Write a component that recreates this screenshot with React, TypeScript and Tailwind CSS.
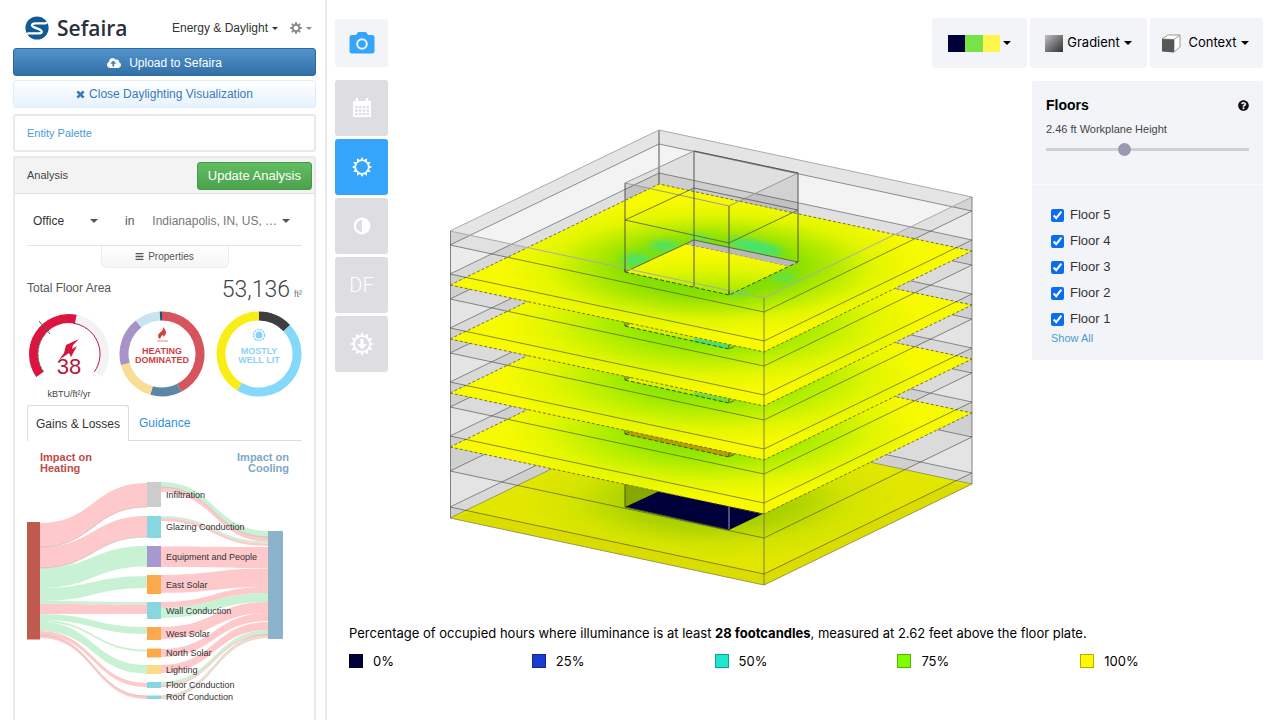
import type { ReactNode } from "react";
import { FaBars, FaCloudUploadAlt, FaQuestionCircle } from "react-icons/fa";

type Point = [number, number];

const BLUE = "#35a4fb";

function Caret() {
  return (
    <svg viewBox="0 0 8 4" className="w-2 h-1 shrink-0" aria-hidden="true">
      <path d="M0 0h8L4 4z" fill="currentColor" />
    </svg>
  );
}

function SmallCaret() {
  return (
    <svg viewBox="0 0 8 4" className="w-[6px] h-[3px] shrink-0" aria-hidden="true">
      <path d="M0 0h8L4 4z" fill="currentColor" />
    </svg>
  );
}

function SpikyRing({ size, children }: { size: number; children?: ReactNode }) {
  return (
    <svg viewBox="-12 -12 24 24" width={size} height={size} aria-hidden="true">
      <circle r="8" fill="none" stroke="currentColor" strokeWidth="1.800" />
      {Array.from({ length: 12 }, (_, i) => (
        <path key={i} d="M-2 -8.500L0 -12L2 -8.500z" fill="currentColor" transform={`rotate(${i * 30})`} />
      ))}
      {children}
    </svg>
  );
}

function Logo() {
  return (
    <div className="flex items-center gap-2">
      <svg viewBox="0 0 24 24" className="w-6 h-6" aria-hidden="true">
        <clipPath id="logo">
          <circle cx="12" cy="12" r="11.600" />
        </clipPath>
        <g clipPath="url(#logo)">
          <rect width="24" height="24" fill="#125a94" />
          <path
            d="M24 5.500L20.500 7.400H10.500C6.600 7.400 6 9.800 8.800 11.200L15 13.700C17.800 15.200 17.200 17.400 13.600 17.400H3.600L0 18.500"
            fill="none"
            stroke="#fff"
            strokeWidth="2.400"
          />
        </g>
      </svg>
      <span className="font-['Open_Sans',sans-serif] font-semibold text-[21px] leading-6 text-[#2b2f3c]">
        Sefaira
      </span>
    </div>
  );
}

function polar(r: number, deg: number): Point {
  const a = ((deg - 90) * Math.PI) / 180;
  return [r * Math.cos(a), r * Math.sin(a)];
}

function arc(r: number, from: number, to: number) {
  const [x1, y1] = polar(r, from);
  const [x2, y2] = polar(r, to);
  return `M${x1} ${y1}A${r} ${r} 0 ${to - from > 180 ? 1 : 0} 1 ${x2} ${y2}`;
}

function Donut({ parts, label, color, children }: {
  parts: { from: number; to: number; color: string }[];
  label: [string, string];
  color: string;
  children: ReactNode;
}) {
  return (
    <svg viewBox="-43 -43 86 86" className="w-[86px] h-[86px]">
      {parts.map((p) => (
        <path key={p.from} d={arc(38, p.from, p.to)} fill="none" stroke={p.color} strokeWidth="9" />
      ))}
      {children}
      <g fill={color} textAnchor="middle" className="text-[9px] font-bold">
        <text y="0">{label[0]}</text>
        <text y="9">{label[1]}</text>
      </g>
    </svg>
  );
}

const heatingParts = [
  { from: 0, to: 153, color: "#d6545b" },
  { from: 153, to: 196, color: "#5c86a8" },
  { from: 196, to: 255, color: "#fadd94" },
  { from: 255, to: 322, color: "#a793c8" },
  { from: 322, to: 357, color: "#c9e4ee" },
  { from: 357, to: 360, color: "#1d5579" },
];

const daylightParts = [
  { from: 0, to: 47, color: "#3e3e3e" },
  { from: 47, to: 211, color: "#84d9fb" },
  { from: 211, to: 360, color: "#f8ee15" },
];

function EnergyGauge() {
  return (
    <svg viewBox="-42 -43 84 92" className="w-[84px] h-[92px]">
      <path d={arc(35.5, 10, 125)} fill="none" stroke="#f3f3f3" strokeWidth="9" />
      <path d={arc(35.5, 235, 371)} fill="none" stroke="#dc1440" strokeWidth="9" />
      <path d={arc(31, 8, 125)} fill="none" stroke="#c01540" strokeWidth="1" />
      <path d={arc(31, 235, 310)} fill="none" stroke="#4d7a50" strokeWidth="1" strokeDasharray="3 1" />
      <path d="M-30 -33L-19 -20" stroke="#3e6e45" strokeWidth="1" />
      <path d="M10 -15L-3 -9L-5 -1L-10 6L0 -1L2 3L8 -8L3 -5L4 -9z" fill="#d3173f" />
      <text y="20" textAnchor="middle" fill="#b3193c" className="text-[22px]">38</text>
      <text y="43" textAnchor="middle" fill="#444" className="text-[9px]">kBTU/ft²/yr</text>
    </svg>
  );
}

const PINK = "#fdc9cb";
const GREEN = "#c9f1d3";

const sankeyNodes = [
  { name: "Infiltration", y: 482, h: 25, color: "#cccccc" },
  { name: "Glazing Conduction", y: 516, h: 22, color: "#87d6e0" },
  { name: "Equipment and People", y: 546, h: 21, color: "#a898d0" },
  { name: "East Solar", y: 575, h: 19, color: "#fba94b" },
  { name: "Wall Conduction", y: 602, h: 17, color: "#87d6e0" },
  { name: "West Solar", y: 627, h: 13, color: "#fba94b" },
  { name: "North Solar", y: 648.5, h: 9, color: "#fba94b" },
  { name: "Lighting", y: 665, h: 9, color: "#fddb84" },
  { name: "Floor Conduction", y: 682, h: 6, color: "#87d6e0" },
  { name: "Roof Conduction", y: 695.5, h: 3.5, color: "#87d6e0" },
];

// [top at bar, bottom at bar, top at node, bottom at node, colour]
const heatingLinks: [number, number, number, number, string][] = [
  [523, 547, 483, 507, PINK],
  [547, 568, 516, 537, PINK],
  [568, 588, 546, 566.5, GREEN],
  [588, 601, 576, 588, GREEN],
  [601, 604, 602, 604.5, GREEN],
  [604, 614, 604.5, 614, PINK],
  [614, 620, 627, 634, GREEN],
  [620, 622, 649.5, 651.5, GREEN],
  [622, 631, 665, 673.5, GREEN],
  [631, 635, 683, 687, PINK],
  [635, 638, 696, 699, PINK],
];

const coolingLinks: [number, number, number, number, string][] = [
  [531, 537, 482, 487, GREEN],
  [537, 541.5, 487, 492, PINK],
  [541.5, 543.5, 516, 518, GREEN],
  [543.5, 546, 518, 521, PINK],
  [547, 568, 546.5, 567, PINK],
  [568.5, 587, 575, 593, PINK],
  [587, 593, 602, 608, PINK],
  [593, 602, 608, 618, GREEN],
  [602, 613, 627, 639, PINK],
  [613, 621, 649, 657, PINK],
  [622, 630, 665, 673, PINK],
  [630, 633, 682, 685, GREEN],
  [633, 635, 685, 687, PINK],
  [635, 636.5, 696, 697.5, GREEN],
  [636.5, 638, 697.5, 699, PINK],
];

function ribbon(x1: number, a1: number, b1: number, x2: number, a2: number, b2: number) {
  const m = (x1 + x2) / 2;
  return `M${x1} ${a1}C${m} ${a1} ${m} ${a2} ${x2} ${a2}V${b2}C${m} ${b2} ${m} ${b1} ${x1} ${b1}z`;
}

function Sankey() {
  return (
    <svg viewBox="27 480 275 224" className="w-[275px] h-[224px]">
      {heatingLinks.map(([a, b, c, d, color]) => (
        <path key={a} d={ribbon(40, a, b, 147, c, d)} fill={color} />
      ))}
      {coolingLinks.map(([a, b, c, d, color]) => (
        <path key={a} d={ribbon(161, c, d, 268, a, b)} fill={color} />
      ))}
      <g fill="none" stroke="#b9b0a5" strokeWidth="0.5">
        <path d="M40 547C93 547 93 507 147 507" />
        <path d="M40 568C93 568 93 537 147 537" />
        <path d="M161 487C214 487 214 537 268 537" />
        <path d="M40 635C93 635 93 696 147 696" />
        <path d="M161 696C214 696 214 635 268 635" />
      </g>
      <rect x="27" y="522" width="13" height="117.5" fill="#c15a4e" />
      <rect x="268" y="531" width="15" height="108" fill="#8db2cb" />
      {sankeyNodes.map((n) => (
        <g key={n.name}>
          <rect x="147" y={n.y} width="14" height={n.h} fill={n.color} />
          <text x="166" y={n.y + n.h / 2 + 3} fill="#333" className="text-[9px]">
            {n.name}
          </text>
        </g>
      ))}
    </svg>
  );
}

function Sidebar() {
  return (
    <aside className="w-[327px] shrink-0 border-r-2 border-[#e9e9e9] pl-[13px] pr-[9px] flex flex-col">
      <header className="flex items-center justify-between h-12 pt-2 pl-[12px] pr-1 text-xs text-[#333]">
        <Logo />
        <div className="flex items-center gap-3">
          <button type="button" className="flex items-center gap-1">
            Energy &amp; Daylight <SmallCaret />
          </button>
          <button type="button" aria-label="Settings" className="flex items-center gap-1 text-[#8d8d8d]">
            <svg viewBox="-12 -12 24 24" className="w-3 h-3" aria-hidden="true">
              <circle r="6.500" fill="none" stroke="currentColor" strokeWidth="4" />
              {[0, 45, 90, 135, 180, 225, 270, 315].map((a) => (
                <path key={a} d="M-2.500 -8L-1.600 -12H1.600L2.500 -8z" fill="currentColor" transform={`rotate(${a})`} />
              ))}
            </svg>
            <SmallCaret />
          </button>
        </div>
      </header>

      <button
        type="button"
        className="h-7 pt-[2px] flex items-center justify-center gap-2 rounded-[3px] border border-[#2d689e] bg-linear-to-b from-[#5292cb] to-[#3270a8] text-xs text-white"
      >
        <FaCloudUploadAlt className="w-[14px] h-[14px]" /> Upload to Sefaira
      </button>
      <button
        type="button"
        className="mt-1 h-7 flex items-center justify-center gap-1 rounded-[3px] border border-[#dfeefa] bg-linear-to-b from-white to-[#e6f2fd] text-xs text-[#3a7ab8]"
      >
        <svg viewBox="0 0 10 10" className="w-[9px] h-[9px]" aria-hidden="true">
          <path d="M1.500 1.500L8.500 8.500M8.500 1.500L1.500 8.500" stroke="currentColor" strokeWidth="3" />
        </svg>
        Close Daylighting Visualization
      </button>

      <div className="mt-[6px] h-[38px] flex items-center px-3 border-2 border-[#e9e9e9] rounded-[3px]">
        <a href="#palette" className="text-[11px] text-[#4a9bd6]">Entity Palette</a>
      </div>

      <section className="mt-1 flex-1 border-2 border-b-0 border-[#e9e9e9] rounded-t-[3px]">
        <div className="h-9 flex items-center justify-between pl-3 pr-[2px] bg-[#f3f3f3] border-b border-[#dedede]">
          <h2 className="text-[11px] text-[#444]">Analysis</h2>
          <button
            type="button"
            className="h-7 px-[10px] rounded-[3px] border border-[#46984a] bg-linear-to-b from-[#62bd62] to-[#4ba24c] text-[13px] text-white"
          >
            Update Analysis
          </button>
        </div>

        <div className="px-3">
          <div className="h-[52px] pt-[2px] flex items-center border-b border-[#e4e4e4] text-xs text-[#555]">
            <div className="ml-[6px] w-[65px] flex items-center">
              <select aria-label="Building use" defaultValue="Office" className="flex-1 w-0 appearance-none text-[#333]">
                <option>Office</option>
              </select>
              <Caret />
            </div>
            <span className="ml-[27px] mr-[18px]">in</span>
            <div className="flex-1 mr-3 flex items-center">
              <select aria-label="Location" defaultValue="Indianapolis" className="flex-1 w-0 appearance-none text-[#777]">
                <option value="Indianapolis">Indianapolis, IN, US, …</option>
              </select>
              <Caret />
            </div>
          </div>
          <button
            type="button"
            className="mx-auto w-[128px] h-[22px] flex items-center justify-center gap-1 rounded-b-md border border-t-0 border-[#ececec] bg-linear-to-b from-white to-[#f5f5f5] text-[10px] text-[#555]"
          >
            <FaBars className="w-[9px] h-[9px]" /> Properties
          </button>

          <div className="h-[39px] flex items-center justify-between">
            <span className="text-xs text-[#555]">Total Floor Area</span>
            <span className="flex items-baseline gap-1 pt-[5px]">
              <span className="font-[Roboto,sans-serif] font-light text-[23px] leading-8 text-[#444]">53,136</span>
              <span className="text-[9px] text-[#777]">ft²</span>
            </span>
          </div>

          <div className="h-[98px] flex items-start pt-1">
            <EnergyGauge />
            <div className="ml-2 mr-[11px]">
              <Donut parts={heatingParts} label={["HEATING", "DOMINATED"]} color="#cc3f46">
                <path d="M-2 -15C-6 -18 -3 -21 0 -23C1 -25 1 -26 1 -27C4 -24 6 -20 1 -17C2 -20 0 -20 -2 -15z" fill="#d0443a" />
                <path d="M-5 -13H6" stroke="#e58a85" strokeWidth="1" />
              </Donut>
            </div>
            <Donut parts={daylightParts} label={["MOSTLY", "WELL LIT"]} color="#86d4f5">
              <g transform="translate(0 -19)">
                <circle r="3.500" fill="#86d4f5" />
                <circle r="5.500" fill="none" stroke="#86d4f5" strokeWidth="1.500" strokeDasharray="2 0.900" />
              </g>
            </Donut>
          </div>

          <nav className="flex h-9 text-xs">
            <a href="#gains" className="w-[102px] flex items-center justify-center rounded-t-[3px] border border-b-0 border-[#dcdcdc] text-[#333]">
              Gains &amp; Losses
            </a>
            <a href="#guidance" className="flex-1 flex items-center pl-[10px] border-b border-[#dcdcdc] text-[#2f8fdc]">
              Guidance
            </a>
          </nav>

          <div className="flex justify-between pt-[11px] px-[13px] text-[11px] leading-[11px] font-bold">
            <p className="text-[#c04a45]">Impact on<br />Heating</p>
            <p className="text-right text-[#7da7c8]">Impact on<br />Cooling</p>
          </div>
          <div className="mt-[6px]">
            <Sankey />
          </div>
        </div>
      </section>
    </aside>
  );
}

// Every storey shares one footprint; a ring is given by the height of its left corner.
function ring(y: number): Point[] {
  return [[450, y], [659, y - 101], [972, y - 34], [764, y + 67]];
}

function coreRing(y: number): Point[] {
  return [[625, y], [694, y - 32], [798, y - 10], [729, y + 23]];
}

const pts = (p: Point[]) => p.map((q) => q.join(",")).join(" ");
const closed = (p: Point[]) => `M${p.map((q) => q.join(" ")).join("L")}Z`;

const bands = [
  { top: 231, bottom: 245, fill: "#e5e5e5" },
  { top: 245, bottom: 274, fill: "#f3f3f3" },
  { top: 274, bottom: 299, fill: "#e0e0e0" },
  { top: 299, bottom: 328, fill: "#ececec" },
  { top: 328, bottom: 353, fill: "#e0e0e0" },
  { top: 353, bottom: 382, fill: "#ececec" },
  { top: 382, bottom: 407, fill: "#e0e0e0" },
  { top: 407, bottom: 436, fill: "#ececec" },
  { top: 436, bottom: 471, fill: "#e0e0e0" },
  { top: 471, bottom: 507, fill: "#ececec" },
  { top: 507, bottom: 518, fill: "#e0e0e0" },
];

const wallLines = [245, 274, 299, 328, 353, 382, 407, 436, 471, 507];
const plates = [447, 393, 339, 285];

function Plate({ y }: { y: number }) {
  const hole = coreRing(y - 13);
  const id = `plate${y}`;
  const top = y === 285;
  const [l, b, r, f] = hole;
  return (
    <g>
      <clipPath id={id}>
        <path d={closed(ring(y)) + closed(hole)} clipRule="evenodd" />
      </clipPath>
      <g clipPath={`url(#${id})`}>
        <polygon points={pts(ring(y))} fill={`url(#heat${y})`} />
        {top && (
          <g filter="url(#soften)" fill="#42e27c">
            <ellipse cx="664" cy="246" rx="15" ry="5" opacity="0.9" />
            <ellipse cx="636" cy="260" rx="14" ry="7" opacity="0.8" />
            <ellipse cx="756" cy="247" rx="28" ry="6" transform="rotate(12 756 247)" />
            <ellipse cx="785" cy="278" rx="12" ry="5" opacity="0.6" />
            <ellipse cx="736" cy="292" rx="10" ry="4" opacity="0.5" />
            <ellipse cx="700" cy="238" rx="12" ry="4" opacity="0.6" />
          </g>
        )}
      </g>
      {/* what shows through the opening, below the slab edge */}
      {top && <polygon points={pts([b, r, [r[0] - 9, r[1] + 4], [b[0] - 7, b[1] + 4]])} fill="#b9b9b9" />}
      {y === 339 && <polygon points="694,338 729,345 729,349 694,342" fill="#42e27c" />}
      {y === 393 && <polygon points="694,392 729,399 729,403 694,396" fill="#6fe03a" />}
      {y === 447 && <polygon points={pts([l, b, r, f])} fill="#b5a200" />}
      <path d={`M${ring(y)[0]}L${ring(y)[1]}L${ring(y)[2]}`} fill="none" stroke="#77761f" strokeDasharray="3 2" />
      <path d={`M${l}L${b}L${r}`} fill="none" stroke="#5c6640" strokeWidth="1" />
      <path d={`M${l}L${f}L${r}`} fill="none" stroke="#44521c" strokeWidth="1" strokeDasharray="4 2" />
      <path d={`M${l}v-4M${f}v-4`} stroke="#44521c" />
      <path d={`M${ring(y)[0]}L${ring(y)[3]}L${ring(y)[2]}`} fill="none" stroke="#77761f" strokeDasharray="3 2" />
    </g>
  );
}

function Building() {
  const [cl, cb, cr, cf] = coreRing(183);
  const [bl, bb, br, bf] = coreRing(272);
  const [ml, mb, mr, mf] = coreRing(220);
  return (
    <svg viewBox="448 128 524 460" className="w-[524px] h-[460px] shrink-0 overflow-visible" role="img" aria-label="Daylight results by floor">
      <defs>
        <filter id="soften" x="-50%" y="-100%" width="200%" height="300%">
          <feGaussianBlur stdDeviation="5 3" />
        </filter>
        {plates.map((y) => (
          <radialGradient
            key={y}
            id={`heat${y}`}
            gradientUnits="userSpaceOnUse"
            cx="0"
            cy="0"
            r="1.200"
            gradientTransform={`matrix(157 33.500 104.500 -50.500 711 ${y - 17})`}
          >
            <stop offset="0.250" stopColor={y === 285 ? "#7ade0a" : "#86e508"} />
            <stop offset="0.380" stopColor={y === 285 ? "#8ae000" : "#9bea00"} />
            <stop offset="0.540" stopColor={y === 285 ? "#b2ea00" : "#bef000"} />
            <stop offset="0.720" stopColor="#e2f600" />
            <stop offset="0.920" stopColor="#f7fa00" />
          </radialGradient>
        ))}
        <radialGradient
          id="heatBase"
          gradientUnits="userSpaceOnUse"
          cx="0"
          cy="0"
          r="1.200"
          gradientTransform="matrix(157 33.500 104.500 -50.500 711 501)"
        >
          <stop offset="0.250" stopColor="#a2cc00" />
          <stop offset="0.400" stopColor="#b3d500" />
          <stop offset="0.600" stopColor="#d2e300" />
          <stop offset="0.850" stopColor="#e2e700" />
        </radialGradient>
      </defs>

      {bands.map(({ top, bottom, fill }) => {
        const [tl, tb, tr] = ring(top);
        const [ll, lb, lr] = ring(bottom);
        return <polygon key={top} points={pts([tl, tb, tr, lr, lb, ll])} fill={fill} />;
      })}
      {wallLines.map((y) => {
        const [l, b, r] = ring(y);
        return <path key={y} d={`M${l}L${b}L${r}`} fill="none" stroke="#8b8b8b" />;
      })}
      <path d="M659 130V184" stroke="#555" />

      {/* near walls, seen through to the far ones */}
      {bands.map(({ top, bottom }, i) => {
        const [tl, , tr, tf] = ring(top);
        const [ll, , lr, lf] = ring(bottom);
        return (
          <polygon key={top} points={pts([tl, tf, tr, lr, lf, ll])} fill="#000" opacity={i % 2 ? 0.03 : 0.07} />
        );
      })}

      <polygon points={pts([cl, cb, bb, bl])} fill="#000" opacity="0.08" />
      <polygon points={pts([cb, cr, br, bb])} fill="#000" opacity="0.08" />
      <polygon points={pts([cl, cf, cr, br, bf, bl])} fill="#000" opacity="0.06" />

      <polygon points={pts(ring(518))} fill="url(#heatBase)" />
      <polygon points="472,512 764,574 950,484 972,484 764,585 450,518" fill="#d9da00" opacity="0.8" />
      <polygon points="625,475 694,470 694,475 625,507" fill="#86a800" />
      <polygon points={pts(coreRing(507))} fill="#00003a" />
      <path d="M625 480V507M625 507L729 530" stroke="#4a5220" fill="none" />
      <path d="M729 500V529" stroke="#9a9ab8" />
      <polygon points={pts(ring(518))} fill="none" stroke="#9a9a55" strokeWidth="1" />

      {plates.map((y) => (
        <Plate key={y} y={y} />
      ))}

      <g fill="none" stroke="#4f4f3a" strokeOpacity="0.650" strokeWidth="1">
        {wallLines.map((y) => {
          const [l, , r, f] = ring(y);
          return <path key={y} d={`M${l}L${f}L${r}`} />;
        })}
      </g>
      <polygon points={pts(ring(231))} fill="none" stroke="#aaaaaa" />
      <path d="M450.500 231V518M972 197V484M764 298V585" stroke="#666" strokeOpacity="0.800" />

      <g fill="none" stroke="#555" strokeWidth="1">
        <polygon points={pts([cl, cb, cr, cf])} stroke="#999" />
        <path d={`M${cb}L${cr}`} />
        <polygon points={pts([ml, mb, mr, mf])} strokeOpacity="0.800" />
        <path d={`M${cl}L${bl}M${cb}V287M${cr}L${br}M${cf}L${bf}`} />
      </g>
    </svg>
  );
}

const modes = [
  {
    label: "Annual",
    icon: (
      <svg viewBox="0 0 20 20" className="w-5 h-5" aria-hidden="true">
        <path fillRule="evenodd" fill="currentColor" d="M1 3h18v16H1zM3 8v2.300h2.600V8zM6.800 8v2.300h2.600V8zM10.600 8v2.300h2.600V8zM14.400 8v2.300H17V8zM3 11.500v2.300h2.600v-2.300zM6.800 11.500v2.300h2.600v-2.300zM10.600 11.500v2.300h2.600v-2.300zM14.400 11.500v2.300H17v-2.300zM3 15v2.300h2.600V15zM6.800 15v2.300h2.600V15zM10.600 15v2.300h2.600V15zM14.400 15v2.300H17V15z" />
        <path d="M5 1v4M15 1v4" stroke="currentColor" strokeWidth="2.500" strokeLinecap="round" />
      </svg>
    ),
  },
  { label: "Daylight hours", active: true, icon: <SpikyRing size={20} /> },
  {
    label: "Over and underlit",
    icon: (
      <svg viewBox="0 0 18 18" className="w-[18px] h-[18px]" aria-hidden="true">
        <circle cx="9" cy="9" r="7.200" fill="none" stroke="currentColor" strokeWidth="2.400" />
        <path d="M9 2v14A7 7 0 0 0 9 2z" fill="currentColor" />
      </svg>
    ),
  },
  { label: "Daylight factor", icon: <span className="font-[Roboto,sans-serif] font-light text-[20px]">DF</span> },
  {
    label: "Direct sunlight",
    icon: (
      <SpikyRing size={24}>
        <path d="M-1.600 -5H1.600V0H5L0 5.500L-5 0H-1.600z" fill="currentColor" />
      </SpikyRing>
    ),
  },
];

const floors = ["Floor 5", "Floor 4", "Floor 3", "Floor 2", "Floor 1"];

const legend = [
  { label: "0%", swatch: "bg-[#00003a]" },
  { label: "25%", swatch: "bg-[#1a3ccc]" },
  { label: "50%", swatch: "bg-[#1ee6cf]" },
  { label: "75%", swatch: "bg-[#7dff00]" },
  { label: "100%", swatch: "bg-[#fff800]" },
];

function FloorsPanel() {
  return (
    <section className="w-[231px] shrink-0 self-start mt-px bg-[#f3f4f8] rounded-[2px] text-[#111]">
      <div className="h-[104px] px-[14px] pt-4 border-b border-[#fafafd]">
        <div className="flex items-center justify-between">
          <h2 className="text-sm leading-4 font-bold text-black">Floors</h2>
          <button type="button" aria-label="Help">
            <FaQuestionCircle className="w-[11px] h-[11px]" />
          </button>
        </div>
        <label htmlFor="workplane" className="block mt-2 text-[11px] leading-4 text-[#444]">
          2.46 ft Workplane Height
        </label>
        <input
          id="workplane"
          type="range"
          defaultValue={38}
          className="block mt-1 w-full h-4 appearance-none bg-transparent [&::-webkit-slider-runnable-track]:h-[3px] [&::-webkit-slider-runnable-track]:bg-[#cfd0d6] [&::-webkit-slider-thumb]:appearance-none [&::-webkit-slider-thumb]:-mt-[5px] [&::-webkit-slider-thumb]:w-[13px] [&::-webkit-slider-thumb]:h-[13px] [&::-webkit-slider-thumb]:rounded-full [&::-webkit-slider-thumb]:bg-[#9b99b0]"
        />
      </div>
      <div className="px-[19px] pt-[17px] pb-4">
        {floors.map((floor) => (
          <label key={floor} className="flex items-center h-[26px] gap-[6px] text-[13px] text-[#333]">
            <input type="checkbox" defaultChecked className="w-[13px] h-[13px] accent-[#0a6cf1]" />
            {floor}
          </label>
        ))}
        <a href="#all" className="block text-[11px] leading-3 text-[#4a9bd6]">Show All</a>
      </div>
    </section>
  );
}

export default function App() {
  return (
    <div className="flex min-h-screen bg-white font-['Liberation_Sans',Arial,sans-serif]">
      <Sidebar />
      <main className="flex-1 min-w-0 pl-2 pr-[17px] pt-[18px]">
        <div className="flex items-center justify-between h-[50px]">
          <button type="button" aria-label="Save image" className="w-[53px] h-12 flex items-center justify-center rounded-[3px] bg-[#f3f4f8]">
            <svg viewBox="0 0 26 22" className="w-[26px] h-[22px]" aria-hidden="true">
              <path d="M3 3H7L8.500 0.500Q9 0 10 0H16Q17 0 17.500 0.500L19 3H23Q25.500 3 25.500 5.500V19Q25.500 21.500 23 21.500H3Q0.500 21.500 0.500 19V5.500Q0.500 3 3 3z" fill={BLUE} />
              <circle cx="13" cy="12" r="4.800" fill="none" stroke="#e8f6ff" strokeWidth="2" />
            </svg>
          </button>
          <div className="flex gap-[3px] h-full font-[Inter,sans-serif] text-[13px] text-black">
            <button type="button" aria-label="Colour scale" className="w-[95px] flex items-center justify-center gap-[3px] rounded-[3px] bg-[#f3f4f8]">
              <span className="flex h-[17px]">
                <span className="w-[17px] bg-[#00003a]" />
                <span className="w-[18px] bg-[#77e347]" />
                <span className="w-[17px] bg-[#fff64d]" />
              </span>
              <Caret />
            </button>
            <button type="button" className="w-[117px] flex items-center justify-center gap-1 rounded-[3px] bg-[#f3f4f8]">
              <span className="w-[18px] h-[17px] bg-linear-to-br from-[#c4c4c4] to-[#333]" />
              Gradient
              <Caret />
            </button>
            <button type="button" className="w-[113px] pr-1 flex items-center justify-center gap-1 rounded-[3px] bg-[#f3f4f8]">
              <svg viewBox="0 0 20 19" className="w-5 h-[19px] mr-1" aria-hidden="true">
                <path d="M1 5L7 1L19 1V13L13 18V5.500z" fill="#fff" stroke="#999" strokeWidth="1" />
                <path d="M13 5.500L19 1" stroke="#999" />
                <path d="M1 5L13 5.500V18.500L1 17.500z" fill="#565856" />
              </svg>
              Context
              <Caret />
            </button>
          </div>
        </div>

        <div className="mt-3 flex">
          <div className="w-[53px] shrink-0 flex flex-col gap-[3px]">
            {modes.map(({ label, icon, active }) => (
              <button
                key={label}
                type="button"
                aria-label={label}
                className={`h-14 flex items-center justify-center rounded-[3px] text-white ${active ? "bg-[#35a4fb]" : "bg-[#dddde2]"}`}
              >
                {icon}
              </button>
            ))}
          </div>
          <div className="flex-1 flex justify-center pt-12">
            <Building />
          </div>
          <FloorsPanel />
        </div>

        <div className="pl-[14px] pt-9 font-[Inter,sans-serif] text-[13px] text-black">
          <p className="leading-[18px]">
            Percentage of occupied hours where illuminance is at least <b>28 footcandles</b>, measured at 2.62 feet above the floor plate.
          </p>
          <ul className="mt-[10px] grid grid-cols-5">
            {legend.map(({ label, swatch }) => (
              <li key={label} className="flex items-center gap-[10px] leading-[18px]">
                <span className={`w-[14px] h-[14px] border border-black/30 ${swatch}`} />
                {label}
              </li>
            ))}
          </ul>
        </div>
      </main>
    </div>
  );
}
